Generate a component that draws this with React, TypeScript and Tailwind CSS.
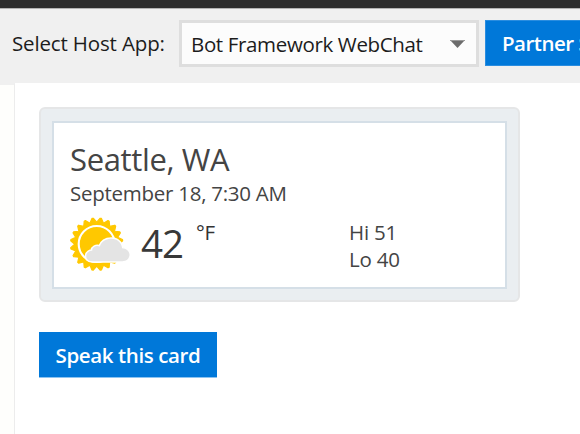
const rays = 20;

function sunOutline() {
  const pts: string[] = [];
  for (let i = 0; i < rays; i++) {
    const h = Math.PI / rays;
    const a = (i * 2 * Math.PI) / rays - Math.PI / 2 + h;
    const p = (r: number, t: number) => `${(27.7 + r * Math.cos(t)).toFixed(2)} ${(27.2 + r * Math.sin(t)).toFixed(2)}`;
    pts.push(`${p(26.2, a - 0.025)} L${p(26.2, a + 0.025)} L${p(22, a + h)}`);
  }
  return `M${pts.join(" L")}Z`;
}

function WeatherIcon() {
  const cloud =
    "M22 43.5C17 43.5 15.8 40 16 37.5C16.3 33.5 19.5 32 22 32C21.5 28 26 25.5 29.5 27.3C31.5 21 36.5 18.8 41 18.8C47 18.8 51.3 23 51.8 29.3C56 29.5 59.2 32.6 59.2 36.4C59.2 40.5 56 43.5 52 43.5Z";
  return (
    <svg className="h-[54px] w-[62px] shrink-0" viewBox="0 0 62 54">
      <path d={sunOutline()} fill="#ffc800" stroke="#ffc800" strokeWidth="1.2" strokeLinejoin="round" />
      <circle cx="27.7" cy="27" r="18" fill="none" stroke="#fff" strokeWidth="2.1" />
      <path d={cloud} transform="translate(1.3 4.7) scale(1 .91)" fill="#e4e4e4" stroke="#fff" strokeWidth="3.2" />
      <path d={cloud} transform="translate(1.3 4.7) scale(1 .91)" fill="#e4e4e4" />
    </svg>
  );
}

export default function App() {
  return (
    <div className="flex h-[434px] w-[580px] flex-col overflow-hidden bg-white font-['Open_Sans',sans-serif] text-[20.5px] whitespace-nowrap">
      <div className="h-[9px] shrink-0 border-b border-[#b4b4b4] bg-[#2e2e2e]" />
      <header className="flex h-[74px] shrink-0 items-start bg-[#f0f0f0] pt-[11px] pl-3 text-[#1c1c1c]">
        <label className="w-[167px] shrink-0 pt-[9px] leading-[28px] tracking-[-0.15px]">Select Host App:</label>
        <div className="flex h-[47px] w-[300px] shrink-0 items-center justify-between border-[3px] border-[#dedede] bg-[#fcfcfc] pr-[11px] pl-[9px]">
          <span className="pt-px leading-[28px] tracking-[-0.35px]">Bot Framework WebChat</span>
          <svg className="h-2 w-[15px]" viewBox="0 0 15 8">
            <path d="M0 0H15L7.5 8Z" fill="#6c6c6c" />
            <path d="M0 .5H15" stroke="#999" />
          </svg>
        </div>
        <button className="ml-[6px] h-[46px] w-[180px] shrink-0 border border-[#2a8de0] bg-[#0078d9] pl-4 text-left font-semibold tracking-[-0.5px] text-white">
          Partner S
        </button>
      </header>
      <div className="flex grow">
        <aside className="w-[15px] shrink-0 border-t-2 border-r border-t-[#f0f0f0] border-r-[#ececec] bg-[#fefefc]" />
        <main className="pt-[24px] pl-6">
          <section className="h-[195px] w-[481px] rounded-[6px] border-2 border-[#e5e6e7] bg-[#eaeef1] p-[11px] pt-3">
            <div className="h-[168px] w-[455px] border-2 border-[#d5dfe7] bg-white pl-[15px] text-[#444]">
              <h1 className="pt-[16px] pl-px text-[31px] leading-[40px] tracking-[-0.36px]">Seattle, WA</h1>
              <p className="pl-px leading-[28px] tracking-[-0.26px]">September 18, 7:30 AM</p>
              <div className="flex pt-[10px]">
                <WeatherIcon />
                <div className="w-[54px] pl-[10px] text-[38.5px] leading-[53px] tracking-[-0.9px] text-[#383838]">42</div>
                <div className="w-[164px] pl-[11px] leading-[30px] tracking-[-0.3px] text-[#333]">°F</div>
                <div className="pt-[2px] leading-[27px] tracking-[-0.2px]">
                  <div>Hi 51</div>
                  <div>Lo 40</div>
                </div>
              </div>
            </div>
          </section>
          <button className="mt-[30px] block h-[46px] w-[178px] border-b border-[#8cc3f0] bg-[#0078d9] pt-0.5 text-center font-semibold tracking-[-0.38px] text-white">
            Speak this card
          </button>
        </main>
      </div>
    </div>
  );
}
